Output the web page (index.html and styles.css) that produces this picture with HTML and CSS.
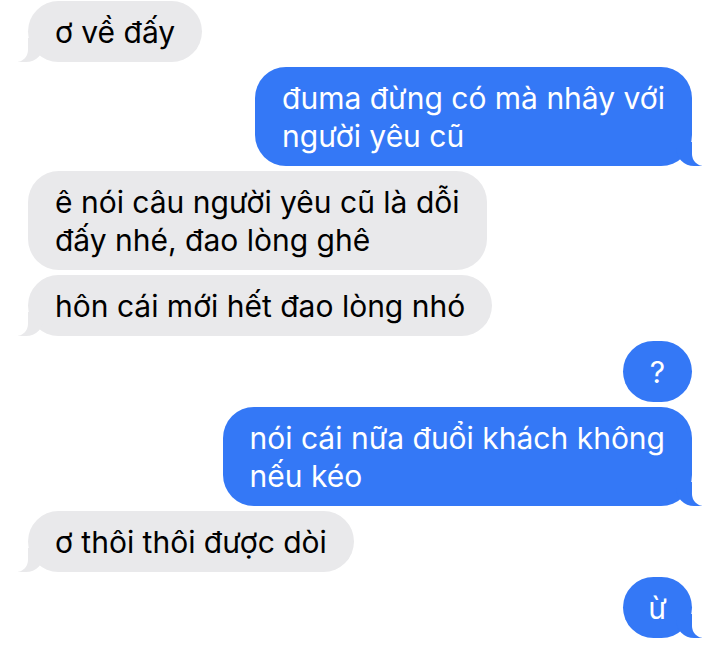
FILE: index.html
```html
<!DOCTYPE html>
<html lang="vi">
<head>
  <meta charset="UTF-8">
  <meta name="viewport" content="width=device-width, initial-scale=1.0">
  <title>Tin nhắn</title>
  <link rel="stylesheet" href="styles.css">
</head>
<body>

  <div class="thread">
    <div class="msg them tail">ơ về đấy</div>
    <div class="msg me tail">đuma đừng có mà nhây với<br>người yêu cũ</div>
    <div class="msg them">ê nói câu người yêu cũ là dỗi<br>đấy nhé, đao lòng ghê</div>
    <div class="msg them tail">hôn cái mới hết đao lòng nhó</div>
    <div class="msg me short">?</div>
    <div class="msg me tail">nói cái nữa đuổi khách không<br>nếu kéo</div>
    <div class="msg them tail">ơ thôi thôi được dòi</div>
    <div class="msg me short tail">ừ</div>
  </div>

</body>
</html>
```

FILE: styles.css
```css
body {
  margin: 0;
  background: #fff;
  font-family: Inter, "Noto Sans", sans-serif;
}
.thread {
  display: flex;
  flex-direction: column;
  gap: 5px;
  padding: 1px 27px 0 28px;
}
.msg {
  position: relative;
  font-size: 30px;
  line-height: 38px;
  padding: 11.5px 27px;
  border-radius: 31px;
  max-width: 480px;
}
.them {
  align-self: flex-start;
  background: #e9e9eb;
  color: #000;
}
.me {
  align-self: flex-end;
  background: #3478f6;
  color: #fff;
}
.short {
  min-width: 69px;
  box-sizing: border-box;
  text-align: center;
  padding: 11.5px 10px;
}

/* bubble tails */
.tail::before, .tail::after {
  content: "";
  position: absolute;
  bottom: 0;
  height: 24px;
}
.them.tail::before {
  left: -10px;
  width: 26px;
  background: #e9e9eb;
  border-bottom-right-radius: 18px;
}
.them.tail::after {
  left: -14px;
  width: 14px;
  background: #fff;
  border-bottom-right-radius: 12px;
}
.me.tail::before {
  right: -10px;
  width: 26px;
  background: #3478f6;
  border-bottom-left-radius: 18px;
}
.me.tail::after {
  right: -14px;
  width: 14px;
  background: #fff;
  border-bottom-left-radius: 12px;
}
```
